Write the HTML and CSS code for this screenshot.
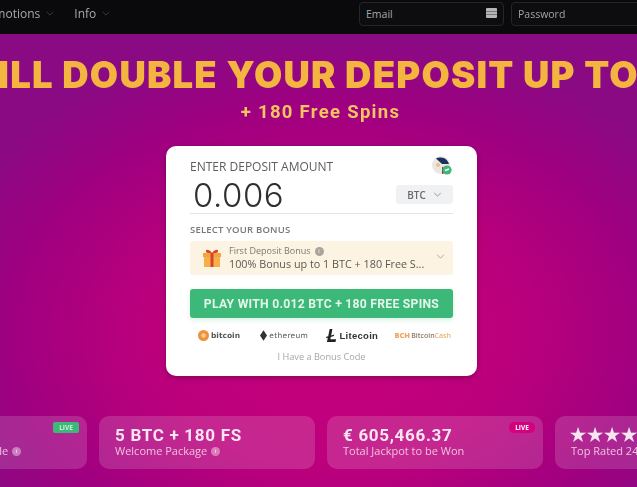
FILE: index.html
```html
<!DOCTYPE html>
<html>
<head>
    <title>Deposit bonus</title>
    <link rel="stylesheet" href="styles.css">
</head>
<body>
    <header class="topbar">
        <nav class="nav">
            <a class="nav-item">Promotions <svg class="nav-chevron" viewBox="0 0 10 6"><path d="M1 1l4 4 4-4"/></svg></a>
            <a class="nav-item">Info <svg class="nav-chevron" viewBox="0 0 10 6"><path d="M1 1l4 4 4-4"/></svg></a>
        </nav>
        <div class="login">
            <div class="field field-email">
                <span>Email</span>
                <svg class="field-icon" viewBox="0 0 11 10"><rect width="11" height="10" rx="1" fill="#b5b5b5"/><path d="M0 3.5h11M0 6.5h11" stroke="#777" stroke-width="1"/></svg>
            </div>
            <div class="field field-password"><span>Password</span></div>
        </div>
    </header>

    <main class="hero">
        <h1 class="hero-title">ILL DOUBLE YOUR DEPOSIT UP TO</h1>
        <p class="hero-sub">+ 180 Free Spins</p>

        <section class="card">
            <div class="card-top">
                <span class="label">ENTER DEPOSIT AMOUNT</span>
                <span class="flag">
                    <svg viewBox="0 0 20 20" width="20" height="20">
                        <circle cx="9" cy="9" r="9" fill="#e9e6e4"/>
                        <path d="M4 2.5a9 9 0 0 1 13 5.5L10 8z" fill="#1d2f5f"/>
                        <path d="M10 18a9 9 0 0 0 6-5l-6-2z" fill="#a8202c"/>
                        <circle cx="6" cy="9" r="2" fill="#eec36c"/>
                        <circle cx="15" cy="14" r="4.6" fill="#3cb878"/>
                        <path d="M13 14.5l4-1.5" stroke="#fff" stroke-width="1.4"/>
                    </svg>
                </span>
            </div>
            <div class="amount-row">
                <span class="amount">0.006</span>
                <div class="currency">BTC <svg class="currency-chevron" viewBox="0 0 10 6"><path d="M1 1l4 4 4-4"/></svg></div>
            </div>
            <div class="label label-small">SELECT YOUR BONUS</div>
            <div class="bonus">
                <svg class="gift" viewBox="0 0 20 18">
                    <path d="M10 4C7 0 3 0 4 3c.3 1 3 1 6 1zm0 0c3-4 7-4 6-1-.3 1-3 1-6 1z" fill="#d9432c"/>
                    <rect x="1" y="4" width="18" height="4" fill="#f2a53c"/>
                    <rect x="2" y="8" width="16" height="10" fill="#f5b04a"/>
                    <rect x="8.5" y="4" width="3" height="14" fill="#d9432c"/>
                </svg>
                <div class="bonus-text">
                    <div class="bonus-name">First Deposit Bonus <i class="info-dot">i</i></div>
                    <div class="bonus-desc">100% Bonus up to 1 BTC + 180 Free S...</div>
                </div>
                <svg class="bonus-chevron" viewBox="0 0 10 6"><path d="M1 1l4 4 4-4"/></svg>
            </div>
            <button class="play">PLAY WITH 0.012 BTC + 180 FREE SPINS</button>
            <div class="coins">
                <span class="coin coin-btc"><svg viewBox="0 0 12 12" width="11" height="11"><circle cx="6" cy="6" r="6" fill="#f0923a"/><circle cx="6" cy="6" r="2.4" fill="#f8d0a4"/></svg>bitcoin</span>
                <span class="coin coin-eth"><svg viewBox="0 0 8 12" width="7" height="11"><path d="M4 0l4 6-4 6-4-6z" fill="#333"/></svg>ethereum</span>
                <span class="coin coin-ltc"><svg viewBox="0 0 12 14" width="11" height="13"><path d="M4 0h3L5.6 7 9 6l-.4 1.6-3.4 1L4.8 11H11l-.6 3H1l1-4.500L0 10l.4-1.600 2-.6z" fill="#222"/></svg>Litecoin</span>
                <span class="coin coin-bch"><b>BCH</b>Bitcoin<em>Cash</em></span>
            </div>
            <a class="bonus-code">I Have a Bonus Code</a>
        </section>

        <section class="stats">
            <div class="stat">
                <div class="stat-big">2,500+</div>
                <div class="stat-small">Online Games Available <i class="info-dot info-dot-light">i</i></div>
                <span class="badge badge-green">LIVE</span>
            </div>
            <div class="stat">
                <div class="stat-big">5 BTC + 180 FS</div>
                <div class="stat-small">Welcome Package <i class="info-dot info-dot-light">i</i></div>
            </div>
            <div class="stat">
                <div class="stat-big">€ 605,466.37</div>
                <div class="stat-small">Total Jackpot to be Won</div>
                <span class="badge badge-pink">LIVE</span>
            </div>
            <div class="stat">
                <div class="stat-big stat-stars">★★★★★</div>
                <div class="stat-small">Top Rated 24/7 Support</div>
            </div>
        </section>
    </main>
</body>
</html>
```

FILE: styles.css
```css
* {
    box-sizing: border-box;
}
html, body {
    margin: 0;
    height: 100%;
    overflow: hidden;
}
body {
    width: 637px;
    height: 487px;
    font-family: "Open Sans", "Liberation Sans", sans-serif;
    background-color: #a3007c;
    filter: blur(0.6px);
}
.topbar {
    height: 34px;
    background-color: #0a0a0c;
    display: flex;
    justify-content: space-between;
    align-items: flex-start;
}
.nav {
    display: flex;
    align-items: center;
    height: 27px;
    gap: 19px;
    margin-left: -25px;
    font-size: 12px;
    color: #a9a9ab;
}
.nav-item {
    display: flex;
    align-items: center;
    gap: 5px;
}
.nav-chevron {
    width: 10px;
    height: 5px;
    fill: none;
    stroke: #444;
}
.login {
    display: flex;
    gap: 7px;
    margin-right: -50px;
    margin-top: 2px;
    align-items: flex-start;
}
.field {
    height: 24px;
    border: 1px solid #262629;
    border-radius: 4px;
    background-color: #0d0d0f;
    display: flex;
    align-items: center;
    justify-content: space-between;
    padding: 0 6px;
    font-size: 10.500px;
    color: #a5a5a8;
}
.field-email {
    width: 145px;
}
.field-password {
    width: 176px;
}
.field-icon {
    width: 11px;
    height: 10px;
    margin-bottom: 2px;
}
.hero {
    height: 453px;
    display: flex;
    flex-direction: column;
    align-items: center;
    padding-top: 21px;
    background: radial-gradient(ellipse 420px 300px at 330px 300px, #c8007c 0%, #bb007c 45%, #a00080 75%, #8a0a84 100%);
}
.hero-title {
    margin: 0;
    white-space: nowrap;
    font-family: Inter, Roboto, "Liberation Sans", sans-serif;
    font-weight: 900;
    font-size: 36.500px;
    line-height: 40px;
    letter-spacing: 1.200px;
    color: #f3b53f;
}
.hero-sub {
    margin: 6px 0 0 4px;
    font-family: Roboto, "Liberation Sans", sans-serif;
    font-weight: 700;
    font-size: 18.500px;
    line-height: 22px;
    letter-spacing: 1.300px;
    color: #f5c45f;
}
.card {
    margin: 23px 0 0 6px;
    width: 311px;
    height: 230px;
    flex-shrink: 0;
    padding: 10px 24px 0;
    background-color: #fff;
    border-radius: 10px;
    box-shadow: 0 2px 6px rgba(0, 0, 0, 0.25);
}
.card-top {
    display: flex;
    justify-content: space-between;
    height: 20px;
    align-items: center;
}
.flag {
    height: 20px;
    margin-right: 1px;
}
.label {
    font-size: 12px;
    color: #5d5d5f;
}
.label-small {
    margin-top: 9px;
    font-size: 9.500px;
    font-weight: 600;
    line-height: 13px;
    color: #77777a;
    letter-spacing: 0.200px;
}
.amount-row {
    display: flex;
    justify-content: space-between;
    align-items: center;
    height: 38px;
    padding: 0 0 0 3px;
    border-bottom: 1px solid #e4e4e6;
}
.amount {
    font-family: Inter, "Open Sans", sans-serif;
    font-weight: 300;
    font-size: 33px;
    letter-spacing: 0.500px;
    color: #2f2f31;
}
.currency {
    width: 57px;
    height: 19px;
    background-color: #f0f1f2;
    border-radius: 3px;
    font-size: 10px;
    font-weight: 600;
    color: #6a6a6d;
    display: flex;
    align-items: center;
    justify-content: center;
    gap: 7px;
}
.currency-chevron {
    width: 9px;
    height: 5px;
    fill: none;
    stroke: #888;
}
.bonus {
    margin-top: 5px;
    height: 34px;
    background-color: #fdf3e3;
    border-radius: 3px;
    display: flex;
    align-items: center;
    padding: 0 8px 0 12px;
}
.gift {
    width: 20px;
    height: 18px;
    flex-shrink: 0;
}
.bonus-text {
    flex: 1;
    margin-left: 7px;
    min-width: 0;
}
.bonus-name {
    font-size: 9px;
    line-height: 12px;
    color: #7c7770;
    display: flex;
    align-items: center;
    gap: 4px;
}
.bonus-desc {
    font-size: 10.800px;
    line-height: 14px;
    color: #5c5852;
    white-space: nowrap;
}
.bonus-chevron {
    width: 9px;
    height: 5px;
    fill: none;
    stroke: #a09a90;
    margin-bottom: 3px;
}
.info-dot {
    display: inline-flex;
    width: 9px;
    height: 9px;
    border-radius: 50%;
    background-color: #aaa59c;
    color: #fff;
    font-size: 6px;
    font-style: normal;
    align-items: center;
    justify-content: center;
}
.info-dot-light {
    background-color: rgba(255, 255, 255, 0.4);
}
.play {
    display: block;
    width: 100%;
    height: 29px;
    margin-top: 14px;
    border: none;
    border-radius: 3px;
    background-color: #3cb878;
    color: #e4f6ea;
    font-family: Roboto, "Liberation Sans", sans-serif;
    font-weight: 700;
    font-size: 12.200px;
    letter-spacing: 0.250px;
    box-shadow: 0 2px 5px rgba(60, 184, 120, 0.2);
}
.coins {
    display: flex;
    justify-content: space-between;
    align-items: center;
    height: 16px;
    margin-top: 9px;
    padding: 0 2px 0 8px;
}
.coin {
    display: flex;
    align-items: center;
    gap: 2px;
    color: #333;
}
.coin-btc {
    font-family: "DejaVu Sans", sans-serif;
    font-weight: 700;
    font-size: 7.500px;
    color: #555;
}
.coin-eth {
    font-family: "DejaVu Sans", sans-serif;
    font-size: 7.500px;
    letter-spacing: 0.300px;
    color: #555;
    margin-left: 4px;
}
.coin-ltc {
    font-family: "Liberation Sans", sans-serif;
    font-weight: 700;
    font-size: 9.500px;
    letter-spacing: 0.300px;
    margin-left: 2px;
}
.coin-bch {
    font-size: 7px;
    font-weight: 600;
    color: #8a7a68;
    gap: 0;
}
.coin-bch b {
    color: #f0a560;
    font-size: 7.500px;
    margin-right: 1px;
}
.coin-bch em {
    font-style: normal;
    color: #eab070;
}
.bonus-code {
    display: block;
    text-align: center;
    margin-top: 7px;
    font-size: 9.200px;
    color: #a6a6a8;
}
.stats {
    margin-top: 40px;
    display: flex;
    gap: 12px;
    align-self: flex-start;
    margin-left: -129px;
}
.stat {
    position: relative;
    width: 216px;
    height: 53px;
    flex-shrink: 0;
    padding: 10px 15px 0 16px;
    border-radius: 10px;
    background-color: rgba(255, 255, 255, 0.15);
}
.stat-big {
    font-family: Roboto, "Liberation Sans", sans-serif;
    font-weight: 700;
    font-size: 17px;
    line-height: 18px;
    letter-spacing: 0.700px;
    color: #f7e6f2;
}
.stat-stars {
    font-size: 18px;
    letter-spacing: 1px;
    margin-left: -1px;
}
.stat-small {
    font-size: 11px;
    line-height: 14px;
    color: #eec2de;
    white-space: nowrap;
    display: flex;
    align-items: center;
    gap: 4px;
}
.badge {
    position: absolute;
    top: 6px;
    right: 8px;
    width: 26px;
    height: 11px;
    border-radius: 2px;
    font-size: 6.500px;
    font-weight: 700;
    line-height: 11px;
    text-align: center;
    color: #fff;
}
.badge-green {
    background-color: #3cb878;
    color: #c6efd6;
}
.badge-pink {
    background-color: #d5007f;
    border-radius: 5px;
}
```
